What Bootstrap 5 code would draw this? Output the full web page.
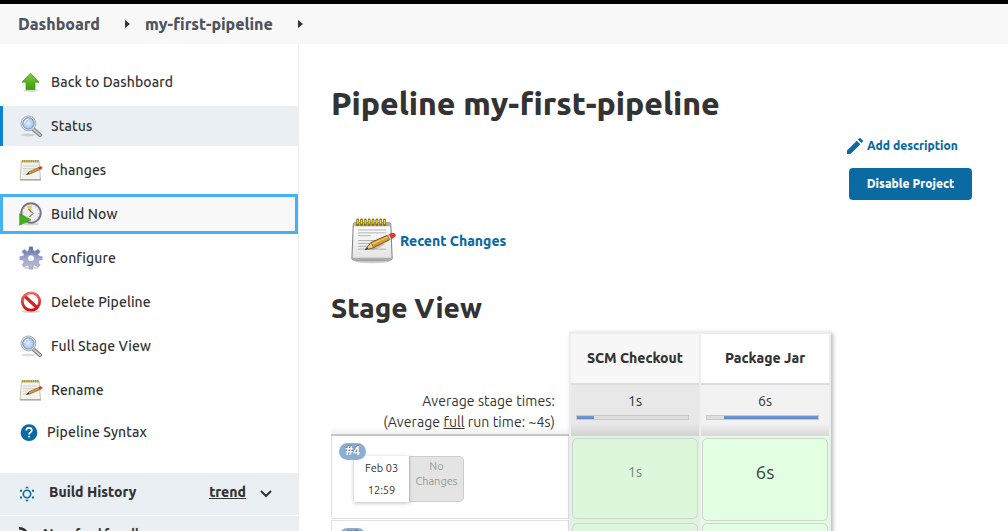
<!DOCTYPE html>
<html lang="en">
<head>
<meta charset="utf-8">
<meta name="viewport" content="width=device-width, initial-scale=1">
<title>my-first-pipeline [Jenkins]</title>
<link href="https://cdn.jsdelivr.net/npm/bootstrap@5.3.0/dist/css/bootstrap.min.css" rel="stylesheet">
<style>
body{font-family:Ubuntu,"Noto Sans",sans-serif;font-size:14px;line-height:20px;color:#333;height:531px;overflow:hidden;background:#fff;white-space:nowrap}
a{color:inherit;text-decoration:none}
.topbar{height:4px;background:#000}
.crumbs{height:40px;background:#f8f8f8;padding-left:18px;font-size:16px;font-weight:800;color:#4d545d;letter-spacing:-.04px}
.crumb-arrow{width:0;height:0;border:4px solid transparent;border-left:5px solid #333;border-right:0;margin:0 15px 0 25px}
.side{width:299px;height:487px;border-right:1px solid #eee;padding-top:18px;flex:none;overflow:hidden}
.task{height:40px;margin-bottom:4px;padding-left:19px;font-weight:500;width:298px;letter-spacing:.1px}
.task svg{width:24px;height:24px;margin-right:8px;flex:none}
.task.current{background:#e9eff2;border-left:3px solid #0b84d8;padding-left:16px}
.task.focused{background:#f8f8f8;border:3px solid #45b1f5;padding-left:16px}
.task.syntax{margin:-2px 0 0;letter-spacing:.14px}
.task.syntax svg{margin-right:4px}
.history{height:42px;margin-top:21px;background:#e9eff2;width:298px;padding:0 25px 4px 19px;font-weight:800}
.history-title{margin-left:14px}
.trend{text-decoration:underline}
.chev{margin:4px 0 0 13px}
.filterbar{height:16px;margin-top:1px;background:#e9eff2;width:298px;padding:8px 0 0 18px;font-size:12px;font-weight:800}
.feed{margin-left:9px}
.main{padding-left:32px;width:709px;overflow:hidden;height:487px}
h1{font-size:32px;line-height:40px;font-weight:800;margin:39px 0 0;letter-spacing:-.03px}
h2{font-size:28px;line-height:36px;font-weight:800;margin:27px 0 0}
.blue{color:#0b6aa2}
.add{height:20px;font-size:12px;font-weight:800;padding-left:515px;margin-top:13px}
.add svg{margin-right:3px}
.disable{width:123px;height:32px;margin:12px 0 0 518px;background:#0b6aa2;color:#fff;font-size:12px;font-weight:800;border-radius:4px}
.recent{height:44px;margin:19px 0 0 19px;font-weight:800}
.stages{margin-top:6px;height:199px}
.runs{width:238px}
.averages{height:104px;padding:59px 14px 0 0;line-height:21px;letter-spacing:.09px;text-align:right;border-bottom:2px solid #c6c6c6;background:linear-gradient(#fff 92%,#f1f1f1)}
.run{height:83px;border:1px solid #e2e2e2;border-top:0;padding:7px 0 0 7px}
.run + .run{border-top:1px solid #e2e2e2;margin-top:1px}
.num{width:27px;height:17px;border-radius:9px;background:#8bafd4;color:#fff;font-size:12px;line-height:16px;font-weight:700;text-align:center;text-shadow:0 -1px 1px #4b6e94;position:relative;z-index:2}
.stamp{margin-top:-4px;margin-left:15px;font-size:11px;height:46px}
.when{width:55px;background:#fff;box-shadow:0 1px 4px #bbb;line-height:22px;text-align:center;padding-top:1px;z-index:1}
.nochg{width:55px;background:#e4e4e4;border:1px solid #ccc;border-left-color:#bbb;border-radius:0 5px 5px 0;color:#999;line-height:15px;text-align:center;padding-top:2px}
.grid-box{width:262px;height:205px;border:2px solid #e9eef0;border-bottom:0;box-shadow:2px 1px 4px rgba(0,0,0,.28);background:#eee}
.stage{width:128px}
.stage + .stage{margin-left:2px}
.title{height:51px;border-bottom:2px solid #ddd;background:#f7f7f7;font-weight:800;padding-bottom:2px}
.avg{height:51px;background:linear-gradient(#e8e8e8 75%,#d2d2d2);text-align:center;padding:6px 10px 0 5px}
.avg .val{padding-left:5px}
.meter{height:5px;margin-top:4px;background:#dedede;border:1px solid #c9c9c9;overflow:hidden}
.fill{height:5px;margin-top:-1px;background:linear-gradient(#7da2cd,#5381cf)}
.cells{background:#e0f3e0;padding:2px 1px 0}
.cell{height:81px;background:#ddf7dd;border:1px solid #ccd8cc;border-radius:5px;color:#778577;margin-bottom:4px;padding-bottom:13px}
.hot .title{background:#fff}
.hot .avg{background:linear-gradient(#f2f2f2 75%,#d8d8d8)}
.hot .cells{background:#e6fbe6}
.hot .cell{height:83px;margin-bottom:2px;background:#e3ffe3;color:#3f473f;font-size:19px;padding-bottom:16px}
</style>
</head>
<body>
<svg width="0" height="0" class="position-absolute">
<defs>
<linearGradient id="green" x2="0" y2="1"><stop stop-color="#82ca3c"/><stop offset="1" stop-color="#3b9c0c"/></linearGradient>
<linearGradient id="paper" x2="0" y2="1"><stop stop-color="#fff"/><stop offset="1" stop-color="#e3e3e3"/></linearGradient>
<linearGradient id="steel" x2="0" y2="1"><stop stop-color="#526fa5"/><stop offset=".55" stop-color="#a3a9d0"/><stop offset="1" stop-color="#bdb9cf"/></linearGradient>
<linearGradient id="red" x2="0" y2="1"><stop stop-color="#ec6b6b"/><stop offset="1" stop-color="#cf0c0c"/></linearGradient>
<radialGradient id="glass"><stop stop-color="#e4effc"/><stop offset="1" stop-color="#9dbfe9"/></radialGradient>
</defs>
<symbol id="lens" viewBox="0 0 24 24"><ellipse cx="9" cy="21" rx="7" ry="1.5" fill="#000" opacity=".13"/><path d="M14 15l7 6" stroke="#777" stroke-width="4" stroke-linecap="round"/><path d="M14 15l7 6" stroke="#c9c9c9" stroke-width="2" stroke-linecap="round"/><circle cx="9.4" cy="9.4" r="7.4" fill="#eee" stroke="#aaa"/><circle cx="9.4" cy="9.4" r="5.7" fill="url(#glass)" stroke="#6d95cb"/><path d="M5.5 9a4 4 0 014-3.8" stroke="#fff" fill="none"/></symbol>
<symbol id="note" viewBox="0 0 48 48"><ellipse cx="23" cy="45.5" rx="18" ry="1.6" fill="#000" opacity=".2"/><path d="M5 5h36q1.500 0 1.600 2l1.400 35q0 2-2 2H4q-2 0-2-2L3.400 7Q3.500 5 5 5z" fill="url(#paper)" stroke="#777"/><path d="M4.500 5.500h37v3h-37z" fill="#a9a48f"/><path d="M2.500 41.500h41v2h-41z" fill="#aaa"/><path d="M8.500 12.500h29m-29 3h29m-29 3h13m-13 5h29m-29 3h22m-22 3h14m-14 3h29" stroke="#b0b0b0"/><path d="M8 2v5m4-5v5m4-5v5m4-5v5m4-5v5m4-5v5m4-5v5m4-5v5" stroke="#8b7914" stroke-width="3" stroke-linecap="round"/><path d="M8 2.500v3m4-3v3m4-3v3m4-3v3m4-3v3m4-3v3m4-3v3m4-3v3" stroke="#eedb3c" stroke-width="1.300" stroke-linecap="round"/><path d="M18 33q10 1 19-6l-4-1z" fill="#000" opacity=".17"/><path d="M16 33l6-7.500 17-7.500 2.500 4.500-17 8.500z" fill="#d99a2c" stroke="#73501a"/><path d="M16 33l6-7.500 2.500 5.500z" fill="#efd29a" stroke="#73501a" stroke-width=".7"/><path d="M16 33l2-2.500 1 1.700z" fill="#333"/><path d="M23 27l16-7" stroke="#f4c96d" stroke-width="1.200"/><path d="M39 18l2.500 4.500 2-1-2.300-4.500z" fill="#ccc" stroke="#888" stroke-width=".5"/><path d="M41.200 17l2.500-1q3.500-.7 4 2.300-.5 1.700-4.200 3.200z" fill="#e33" stroke="#8d2d25" stroke-width=".6"/></symbol>
<symbol id="note-sm" viewBox="0 0 24 24"><path d="M2.500 3h17.500l1.500 18.500H1z" fill="#f3f3ef" stroke="#c4c2ba"/><path d="M1 21h21v1.600H1z" fill="#aaa"/><path d="M4 8h14M4 10.500h14M4 13h10M4 16h7" stroke="#cfcfcf"/><path d="M3 3.200h17" stroke="#a9962c" stroke-width="2.600" stroke-dasharray="1.500 .6"/><path d="M7.500 16.500l3-3 9.500-4 1 2-9.500 4.200z" fill="#d89a39" stroke="#82602d" stroke-width=".7"/><path d="M7.500 16.500l2-2 1 1.400z" fill="#333"/><path d="M20 9.200l2-.8 1.300 1.700-2.300 1.300z" fill="#e33a2d" stroke="#b33" stroke-width=".6"/></symbol>
</svg>

<div class="topbar"></div>
<nav class="crumbs d-flex align-items-center"><a href="#">Dashboard</a><span class="crumb-arrow"></span><a href="#">my-first-pipeline</a><span class="crumb-arrow"></span></nav>
<div class="d-flex">
<aside class="side">
<a href="#" class="task d-flex align-items-center"><svg viewBox="0 0 24 24"><ellipse cx="12" cy="20.500" rx="8" ry="1.400" opacity=".13"/><path d="M11.500 3.200l8.500 9h-4v7.500H7v-7.500H3z" fill="url(#green)" stroke="#4f9d1e" stroke-width=".8"/></svg>Back to Dashboard</a>
<a href="#" class="task current d-flex align-items-center"><svg><use href="#lens"/></svg>Status</a>
<a href="#" class="task d-flex align-items-center"><svg><use href="#note-sm"/></svg>Changes</a>
<a href="#" class="task focused d-flex align-items-center"><svg viewBox="0 0 24 24"><ellipse cx="12" cy="22" rx="8" ry="1.300" opacity=".15"/><circle cx="12" cy="11" r="9.700" fill="#efefeb" stroke="#77758b" stroke-width="2"/><circle cx="12" cy="11" r="7.600" fill="none" stroke="#aaa" stroke-dasharray=".8 3.180"/><path d="M12 11L8 4.800q2.500-1.500 4.500-.8z" fill="#e8c766"/><path d="M9.500 7l4.500 4.500-3.500 3.500" stroke="#444" fill="none" stroke-width="1"/><path d="M.7 11.700l11.300 6-11.300 5.600z" fill="#42b21c" stroke="#348a17" stroke-width=".6"/></svg>Build Now</a>
<a href="#" class="task d-flex align-items-center"><svg viewBox="0 0 24 24"><ellipse cx="12" cy="22" rx="8" ry="1.500" opacity=".14"/><path fill="url(#steel)" stroke="#8490b5" stroke-width=".5" fill-rule="evenodd" d="M10.300.7h3.400l.5 3.800 1.700.7L19 3.200l2.200 2.400-2.100 2.900.7 1.600 3.500.6v3l-3.500.6-.8 1.700 2.100 2.900-2.400 2.200-2.900-2.100-1.600.8-.6 3.200h-3.200l-.6-3.200-1.700-.8-2.900 2.100-2.200-2.200 2.100-2.900-.8-1.700-3.400-.6v-3l3.400-.6.8-1.600-2.100-2.900 2.200-2.200 2.700 2 1.700-.7zM12 9a3.300 3.300 0 100 6.600A3.300 3.300 0 0012 9z"/></svg>Configure</a>
<a href="#" class="task d-flex align-items-center"><svg viewBox="0 0 24 24"><ellipse cx="12" cy="21.500" rx="9" ry="1.500" opacity=".18"/><path d="M5.500 6l13 12" stroke="#d92222" stroke-width="3.200"/><circle cx="12" cy="11.500" r="8.700" fill="none" stroke="url(#red)" stroke-width="2.800"/></svg>Delete Pipeline</a>
<a href="#" class="task d-flex align-items-center"><svg><use href="#lens"/></svg>Full Stage View</a>
<a href="#" class="task d-flex align-items-center"><svg><use href="#note-sm"/></svg>Rename</a>
<a href="#" class="task syntax d-flex align-items-center"><svg viewBox="0 0 24 24"><circle cx="10" cy="12.700" r="8.400" fill="#0b6aa2"/><path d="M7.300 10.500q0-2.700 2.700-2.700 2.800 0 2.800 2.400 0 1.300-1.500 2.300-1.200.8-1.200 2" fill="none" stroke="#fff" stroke-width="1.700"/><path d="M9.200 15.700h1.700v1.700H9.200z" fill="#fff"/></svg>Pipeline Syntax</a>
<div class="history d-flex align-items-center"><svg width="16" height="16" viewBox="0 0 16 16" class="mt-1" fill="none" stroke="#0b6aa2"><circle cx="8" cy="8" r="3.700" stroke-width="1.600"/><g stroke="none" fill="#0b6aa2"><path d="M8 .3l2 2H6zM8 15.700l2-2H6z"/><path d="M1 3.700h2v2H1zM13 3.700h2v2h-2zM1 10.500h2v2H1zM13 10.500h2v2h-2z"/></g></svg><span class="history-title">Build History</span><a href="#" class="trend ms-auto">trend</a><svg width="14" height="10" viewBox="0 0 14 10" class="chev"><path d="M2 2l5 5 5-5" fill="none" stroke="#333" stroke-width="2"/></svg></div>
<div class="filterbar d-flex align-items-start"><svg width="14" height="14" viewBox="0 0 14 14"><path d="M1 4.300q6 .2 8.500 5.700" fill="none" stroke="#333" stroke-width="2.600"/></svg><span class="feed">Atom feed for all</span></div>
</aside>
<main class="main">
<h1>Pipeline my-first-pipeline</h1>
<div class="add blue d-flex align-items-center"><svg width="18" height="18" viewBox="0 0 18 18"><path d="M1 13.600L10.800 3.800l3.500 3.500L4.500 17H1zM11.900 2.700l1.500-1.500q.6-.5 1.200 0l2.200 2.200q.5.600 0 1.200l-1.400 1.500z" fill="#0b6aa2"/></svg><a href="#">Add description</a></div>
<button class="disable btn d-block p-0 border-0">Disable Project</button>
<div class="recent blue d-flex align-items-center"><svg width="46" height="46" class="me-1 flex-shrink-0"><use href="#note"/></svg><a href="#">Recent Changes</a></div>
<h2>Stage View</h2>
<div class="stages d-flex">
<div class="runs">
<div class="averages">Average stage times:<br>(Average <u>full</u> run time: ~4s)</div>
<div class="run"><div class="num">#4</div><div class="stamp d-flex"><div class="when">Feb 03<br>12:59</div><div class="nochg">No<br>Changes</div></div></div>
<div class="run"><div class="num">#3</div></div>
</div>
<div class="grid-box d-flex">
<div class="stage"><div class="title d-flex align-items-center justify-content-center">SCM Checkout</div><div class="avg"><div class="val">1s</div><div class="meter"><div class="fill" style="width:15%"></div></div></div><div class="cells"><div class="cell d-flex align-items-center justify-content-center">1s</div><div class="cell"></div></div></div>
<div class="stage hot"><div class="title d-flex align-items-center justify-content-center">Package Jar</div><div class="avg"><div class="val">6s</div><div class="meter"><div class="fill ms-auto" style="width:85%"></div></div></div><div class="cells"><div class="cell d-flex align-items-center justify-content-center">6s</div><div class="cell"></div></div></div>
</div>
</div>
</main>
</div>
<script src="https://cdn.jsdelivr.net/npm/bootstrap@5.3.0/dist/js/bootstrap.bundle.min.js"></script>
</body>
</html>
